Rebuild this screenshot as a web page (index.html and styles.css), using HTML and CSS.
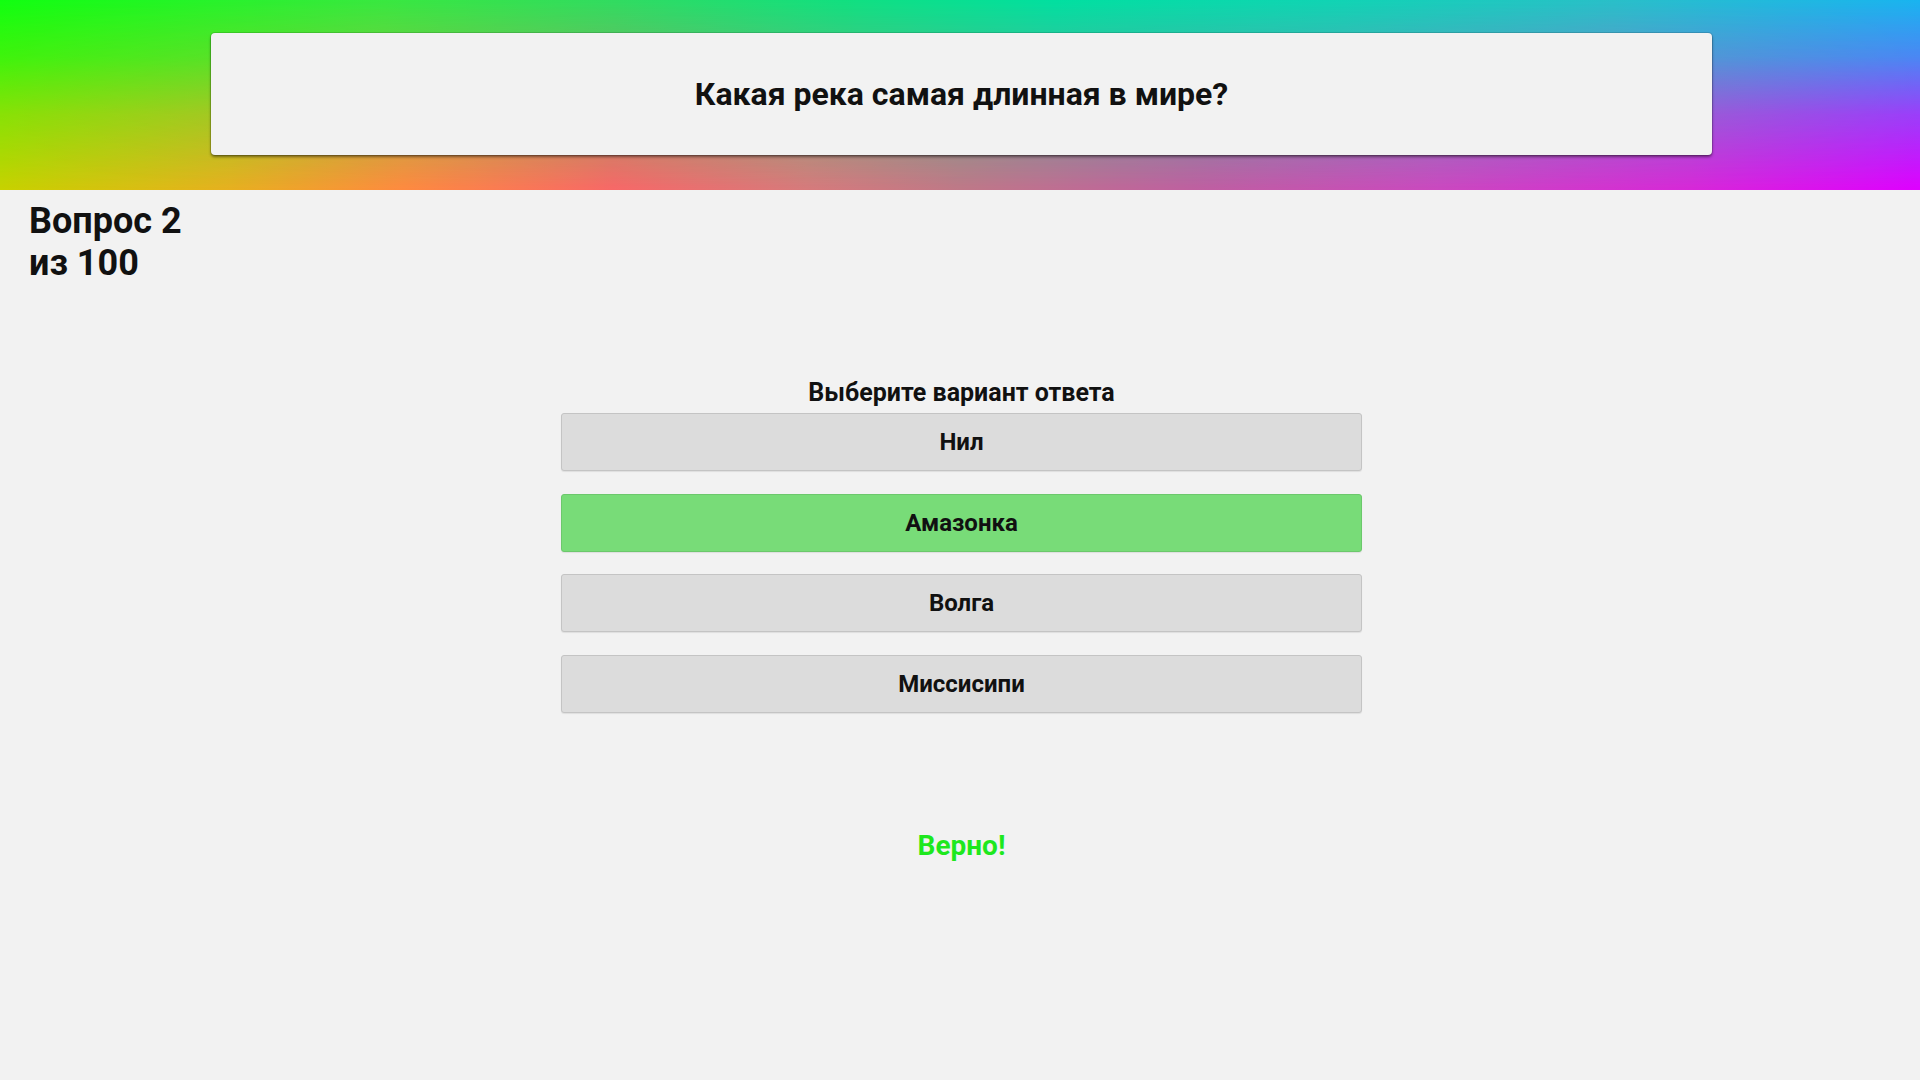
FILE: index.html
```html
<!DOCTYPE html>
<html lang="ru">
<head>
<meta charset="utf-8">
<title>Викторина</title>
<link rel="stylesheet" href="styles.css">
</head>
<body>
<header class="top">
  <div class="question-card">Какая река самая длинная в мире?</div>
</header>
<div class="counter">Вопрос 2<br>из 100</div>
<main class="quiz">
  <div class="prompt">Выберите вариант ответа</div>
  <div class="answers">
    <button class="answer">Нил</button>
    <button class="answer correct">Амазонка</button>
    <button class="answer">Волга</button>
    <button class="answer">Миссисипи</button>
  </div>
  <div class="result">Верно!</div>
</main>
</body>
</html>
```
FILE: styles.css
```css
html, body {
  margin: 0;
  padding: 0;
}
body {
  background: #f2f2f2;
  font-family: Roboto, "Liberation Sans", Arial, sans-serif;
  color: #111;
  width: 1920px;
  height: 1080px;
  overflow: hidden;
}
.top {
  position: relative;
  height: 190px;
  box-sizing: border-box;
  padding-top: 33px;
  padding-left: 3px;
  background: linear-gradient(to right, #c8d200 0%, #e8b020 12%, #ff8a40 21%, #f86868 32%, #d87a7c 42%, #c07888 50%, #c060a0 62%, #cc48c0 75%, #d828d8 88%, #e000ff 100%);
}
.top::before {
  content: "";
  position: absolute;
  inset: 0;
  background: linear-gradient(to right, #10ff10 0%, #38e840 20%, #30dc60 32%, #10e080 44%, #00e0a0 55%, #10d4b4 70%, #28c0c8 84%, #18b4f0 100%);
  -webkit-mask-image: linear-gradient(to bottom, #000 0%, rgba(0,0,0,0.75) 30%, rgba(0,0,0,0.35) 60%, transparent 100%);
  mask-image: linear-gradient(to bottom, #000 0%, rgba(0,0,0,0.75) 30%, rgba(0,0,0,0.35) 60%, transparent 100%);
}
.question-card {
  position: relative;
  z-index: 1;
  width: 1501px;
  height: 122px;
  margin: 0 auto;
  box-sizing: border-box;
  background: #f2f2f2;
  border-radius: 4px;
  box-shadow: 0 0 0 1px rgba(0,0,0,0.12), 0 2px 3px rgba(0,0,0,0.45);
  display: flex;
  align-items: center;
  justify-content: center;
  font-size: 32px;
  font-weight: 700;
}
.counter {
  margin-top: 10px;
  padding-left: 29px;
  font-size: 36px;
  line-height: 42px;
  font-weight: 700;
}
.quiz {
  display: flex;
  flex-direction: column;
  align-items: center;
  margin-top: 94px;
  padding-left: 3px;
}
.prompt {
  font-size: 25px;
  line-height: 29px;
  font-weight: 700;
  margin-bottom: 6px;
}
.answers {
  display: flex;
  flex-direction: column;
  gap: 22.5px;
  width: 801px;
}
.answer {
  height: 58px;
  box-sizing: border-box;
  border: 1px solid #c4c4c4;
  border-radius: 3px;
  background: #dcdcdc;
  font-family: Roboto, "Liberation Sans", Arial, sans-serif;
  font-size: 24px;
  font-weight: 700;
  color: #111;
  padding: 0;
  box-shadow: 0 1px 1px rgba(0,0,0,0.08);
}
.answer.correct {
  background: #78dc78;
  border-color: #6cc86c;
}
.result {
  margin-top: 116px;
  font-size: 28px;
  line-height: 33px;
  font-weight: 700;
  color: #1ee81e;
}
```
